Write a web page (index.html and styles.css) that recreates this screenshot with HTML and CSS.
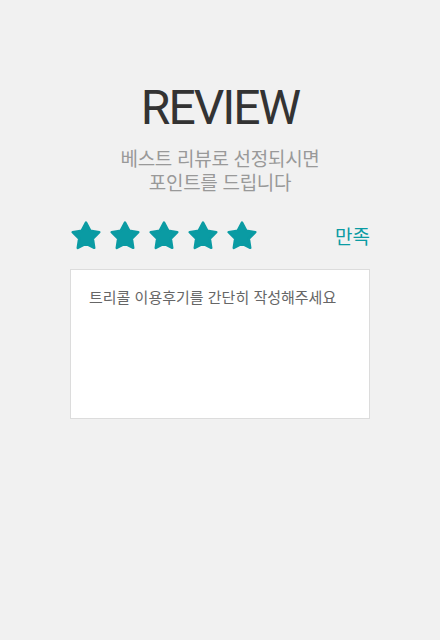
FILE: index.html
```html
<!DOCTYPE html>
<html lang="ko">
<head>
<meta charset="utf-8">
<link rel="stylesheet" href="styles.css">
</head>
<body>
<main class="review">
  <h1 class="title">REVIEW</h1>
  <p class="sub"><span class="sub-line">베스트 리뷰로 선정되시면</span><span class="sub-line">포인트를 드립니다</span></p>
  <div class="rating">
    <div class="stars">
      <svg class="star" viewBox="0 0 32 30"><path d="M16 2.5L20.23 10.68L29.32 12.17L22.85 18.73L24.23 27.83L16 23.7L7.77 27.83L9.15 18.73L2.68 12.17L11.77 10.68Z"/></svg>
      <svg class="star" viewBox="0 0 32 30"><path d="M16 2.5L20.23 10.68L29.32 12.17L22.85 18.73L24.23 27.83L16 23.7L7.77 27.83L9.15 18.73L2.68 12.17L11.77 10.68Z"/></svg>
      <svg class="star" viewBox="0 0 32 30"><path d="M16 2.5L20.23 10.68L29.32 12.17L22.85 18.73L24.23 27.83L16 23.7L7.77 27.83L9.15 18.73L2.68 12.17L11.77 10.68Z"/></svg>
      <svg class="star" viewBox="0 0 32 30"><path d="M16 2.5L20.23 10.68L29.32 12.17L22.85 18.73L24.23 27.83L16 23.7L7.77 27.83L9.15 18.73L2.68 12.17L11.77 10.68Z"/></svg>
      <svg class="star" viewBox="0 0 32 30"><path d="M16 2.5L20.23 10.68L29.32 12.17L22.85 18.73L24.23 27.83L16 23.7L7.77 27.83L9.15 18.73L2.68 12.17L11.77 10.68Z"/></svg>
    </div>
    <span class="label">만족</span>
  </div>
  <textarea class="box" placeholder="트리콜 이용후기를 간단히 작성해주세요"></textarea>
</main>
</body>
</html>
```
FILE: styles.css
```css
html, body {
  margin: 0;
  padding: 0;
  background: #f1f1f1;
}
body {
  font-family: "Noto Sans CJK KR", sans-serif;
}
.review {
  width: 300px;
  margin: 0 auto;
  padding-top: 80px;
  display: flex;
  flex-direction: column;
  align-items: center;
}
.title {
  margin: 0;
  font-family: Roboto, "Noto Sans", sans-serif;
  font-size: 48px;
  font-weight: 400;
  line-height: 56px;
  color: #333;
  letter-spacing: -2px;
}
.sub {
  margin: 10px 0 0;
  font-size: 19px;
  color: #999;
  text-align: center;
  letter-spacing: -0.3px;
  display: flex;
  flex-direction: column;
  align-items: center;
}
.sub-line {
  display: block;
  height: 24px;
  line-height: 24px;
}
.rating {
  width: 100%;
  height: 30px;
  margin-top: 26px;
  display: flex;
  align-items: center;
  justify-content: space-between;
}
.stars {
  display: flex;
  gap: 7px;
}
.star {
  width: 32px;
  height: 30px;
  fill: #0a9ba3;
  stroke: #0a9ba3;
  stroke-width: 2.5;
  stroke-linejoin: round;
}
.label {
  font-size: 19px;
  line-height: 24px;
  color: #0a9ba3;
  font-weight: 400;
  padding-top: 2px;
}
.box {
  box-sizing: border-box;
  width: 300px;
  height: 150px;
  margin-top: 19px;
  padding: 16px 18px;
  background: #fff;
  border: 1px solid #dcdcdc;
  resize: none;
  font-family: "Noto Sans CJK KR", sans-serif;
  font-size: 15px;
  line-height: 22px;
  outline: none;
}
.box::placeholder {
  color: #666;
}
```
